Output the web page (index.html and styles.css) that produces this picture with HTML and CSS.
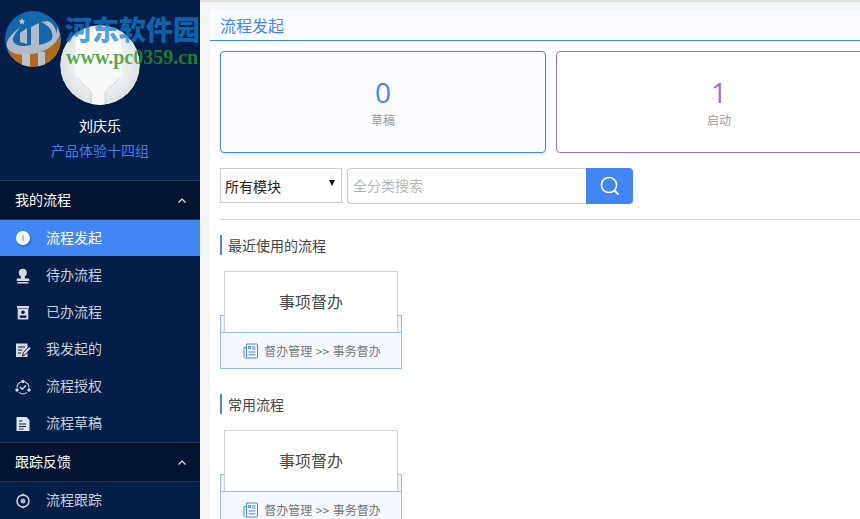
FILE: index.html
```html
<!DOCTYPE html>
<html lang="zh-CN">
<head>
<meta charset="utf-8">
<title>流程发起</title>
<link rel="stylesheet" href="styles.css">
</head>
<body>
<div class="app">
  <aside class="sidebar">
    <div class="profile">
      <div class="avatar">
        <svg viewBox="0 0 80 80" width="80" height="80"><defs><radialGradient id="av"><stop offset="0.6" stop-color="#eef1f1"/><stop offset="1" stop-color="#dce1e2"/></radialGradient></defs><circle cx="40" cy="40" r="40" fill="url(#av)"/><path d="M16 12C20 4 30 2 38 3c10-1 20 2 23 11l1 28c1 6-2 11-6 14-4 6-9 9-11 12v12H32V68c-2-3-8-7-12-12-4-4-6-8-5-14z" fill="#f8fafa"/><path d="M18 53c3 6 11 9 13 15v11M59 53c-3 6-12 9-14 15v11" fill="none" stroke="#c9d1d4" stroke-width="1"/></svg>
      </div>
      <div class="user-name">刘庆乐</div>
      <div class="user-dept">产品体验十四组</div>
    </div>
    <div class="group-head"><span>我的流程</span>
      <svg class="chev" viewBox="0 0 8 5" width="8" height="5"><path d="M.5 4.500L4 1l3.500 3.500" fill="none" stroke="#e8ebf0" stroke-width="1.100"/></svg>
    </div>
    <ul class="menu">
      <li class="menu-item active">
        <svg class="mi mi-shadow" viewBox="0 0 16 16"><circle cx="8" cy="8" r="7" fill="#fff"/><rect x="7.200" y="5" width="1.600" height="6" fill="#a9b6cc"/></svg>
        <span>流程发起</span></li>
      <li class="menu-item">
        <svg class="mi" viewBox="0 0 16 16"><circle cx="7.800" cy="4.700" r="4" fill="#d5dae3"/><path d="M6 7h3.600l.4 3.500h3.300c.7 0 1 .4 1 1V13H1.700v-1.500c0-.6.300-1 1-1H5.700zM2.300 14h11v1.600h-11z" fill="#d5dae3"/></svg>
        <span>待办流程</span></li>
      <li class="menu-item">
        <svg class="mi" viewBox="0 0 16 16"><path d="M2 1h12v2.500H2zM2.700 4h10.600v10.500H2.700z" fill="#d5dae3"/><circle cx="8" cy="7.200" r="1.800" fill="#031e47"/><rect x="4.700" y="10.500" width="6.600" height="2.300" fill="#031e47"/></svg>
        <span>已办流程</span></li>
      <li class="menu-item">
        <svg class="mi" viewBox="0 0 16 16"><path d="M1 1.500h11.500V15H1z" fill="#d5dae3"/><path d="M3 5h7M3 8h4M3 11h3" stroke="#031e47" stroke-width="1.200"/><path d="M7.500 14l.6-3.200 6-6.300 2 2-6 6.300z" fill="#d5dae3" stroke="#031e47" stroke-width="1"/></svg>
        <span>我发起的</span></li>
      <li class="menu-item">
        <svg class="mi" viewBox="0 0 16 16"><path d="M10 3a6 6 0 0 1 4 5.500M12 13.300a6 6 0 0 1-8 0M2 8.500A6 6 0 0 1 6 3" fill="none" stroke="#d5dae3" stroke-width="1.100"/><circle cx="8" cy="2.500" r="1.700" fill="#d5dae3"/><circle cx="2" cy="11" r="1.700" fill="#d5dae3"/><circle cx="14" cy="11" r="1.700" fill="#d5dae3"/><path d="M5 8l2.200 2.200L11 6.500" fill="none" stroke="#d5dae3" stroke-width="1.400"/></svg>
        <span>流程授权</span></li>
      <li class="menu-item">
        <svg class="mi" viewBox="0 0 16 16"><path d="M1.500 1h10l3 3v11h-13z" fill="#e2e6ec"/><path d="M4 5h3.500M4 8h7M4 10.500h7M4 13h4.500" stroke="#031e47" stroke-width="1.100"/></svg>
        <span>流程草稿</span></li>
    </ul>
    <div class="group-head"><span>跟踪反馈</span>
      <svg class="chev" viewBox="0 0 8 5" width="8" height="5"><path d="M.5 4.500L4 1l3.500 3.500" fill="none" stroke="#e8ebf0" stroke-width="1.100"/></svg>
    </div>
    <ul class="menu">
      <li class="menu-item">
        <svg class="mi" viewBox="0 0 16 16"><circle cx="8" cy="8" r="6" fill="none" stroke="#d5dae3" stroke-width="1.500"/><circle cx="8" cy="8" r="2.500" fill="#aab3c2"/><path d="M8 .5v2M8 13.500v2" stroke="#d5dae3" stroke-width="1.200"/></svg>
        <span>流程跟踪</span></li>
    </ul>
  </aside>

  <main class="main">
    <section class="panel">
      <h1 class="panel-title">流程发起</h1>
      <div class="panel-body">
        <div class="stats">
          <div class="stat stat-blue"><div class="stat-num">0</div><div class="stat-label">草稿</div></div>
          <div class="stat stat-purple"><div class="stat-num">1</div><div class="stat-label">启动</div></div>
        </div>
        <div class="toolbar">
          <div class="select"><span>所有模块</span><i class="caret"></i></div>
          <div class="search">
            <div class="search-input">全分类搜索</div>
            <div class="search-btn">
              <svg viewBox="0 0 22 22" width="22" height="22"><circle cx="10" cy="10" r="7.600" fill="none" stroke="#fff" stroke-width="1.500"/><path d="M15.500 15.500l4 4" stroke="#fff" stroke-width="1.800"/></svg>
            </div>
          </div>
        </div>
        <hr class="rule">
        <h2 class="sec-title">最近使用的流程</h2>
        <div class="flow-card">
          <div class="flow-name">事项督办</div>
          <div class="flow-foot">
            <svg class="doc" viewBox="0 0 16 16"><path d="M3.500 1h10a1 1 0 0 1 1 1v12a1 1 0 0 1-1 1h-11a1.500 1.500 0 0 1-1.500-1.500V4.500h2.500M3.500 1v13" fill="none" stroke="#4a86e0" stroke-width="1"/><path d="M5.500 3.500h2v2h-2zM9 4h3.500M9 6h3.500M5.500 9h7M5.500 11.800h7" fill="none" stroke="#4a86e0" stroke-width="1"/></svg>
            <span>督办管理 &gt;&gt; 事务督办</span>
          </div>
        </div>
        <h2 class="sec-title sec-next">常用流程</h2>
        <div class="flow-card">
          <div class="flow-name">事项督办</div>
          <div class="flow-foot">
            <svg class="doc" viewBox="0 0 16 16"><path d="M3.500 1h10a1 1 0 0 1 1 1v12a1 1 0 0 1-1 1h-11a1.500 1.500 0 0 1-1.500-1.500V4.500h2.500M3.500 1v13" fill="none" stroke="#4a86e0" stroke-width="1"/><path d="M5.500 3.500h2v2h-2zM9 4h3.500M9 6h3.500M5.500 9h7M5.500 11.800h7" fill="none" stroke="#4a86e0" stroke-width="1"/></svg>
            <span>督办管理 &gt;&gt; 事务督办</span>
          </div>
        </div>
      </div>
    </section>
  </main>

  <div class="watermark">
    <svg class="wm-logo" viewBox="0 0 56 56" width="56" height="56">
      <defs><clipPath id="wmc"><circle cx="28" cy="28" r="28"/></clipPath></defs>
      <g clip-path="url(#wmc)">
        <rect width="56" height="56" fill="#1268ad"/>
        <path d="M0 38Q28 52 56 26V56H0z" fill="#b06a1e"/>
        <path d="M16 16C6 22 0 31 2 36c3 7 14 9 26 7 12-2 23-9 27-19l-3-10c2 10-6 18-18 20V12l-8 4v18c-8 2-16 1-18-4-1-4 3-9 8-14z" fill="#b4bac5"/>
        <path d="M15 31V22l7-5v16zM36 11l7-1c6 3 9 9 8 15-1 3-3 5-5 6 3-6 2-15-10-20z" fill="#b4bac5"/>
        <path d="M17 43h8v13h-8zM33 41h7v15h-7z" fill="#bcc2cc"/>
        <path d="M17 7l1 2.400 2.400.2-1.900 1.500.7 2.400-2.200-1.400-2.200 1.400.7-2.400-1.900-1.500 2.400-.2z" fill="#c9ced6"/>
      </g>
    </svg>
    <div class="wm-cn">河东软件园</div>
    <div class="wm-url">www.pc0359.cn</div>
  </div>
</div>
</body>
</html>
```
FILE: styles.css
```css
* { box-sizing: border-box; }
html, body { margin: 0; padding: 0; }
body {
  width: 860px;
  height: 519px;
  overflow: hidden;
  font-family: "Noto Sans CJK SC", "Noto Sans", sans-serif;
  font-size: 14px;
}
.app {
  display: flex;
  position: relative;
  width: 860px;
  height: 519px;
  overflow: hidden;
}
.sidebar {
  flex: 0 0 200px;
  background: #031e47;
  color: #c9cfda;
}
.profile {
  height: 181px;
  padding-top: 25px;
  text-align: center;
  border-bottom: 1px solid #1f3655;
}
.avatar {
  width: 80px;
  height: 80px;
  margin: 0 auto;
  border-radius: 50%;
  overflow: hidden;
}
.avatar svg { display: block; }
.user-name {
  margin-top: 10px;
  line-height: 20px;
  color: #fff;
}
.user-dept {
  margin-top: 5px;
  line-height: 20px;
  color: #3f7fe8;
}
.group-head {
  display: flex;
  align-items: center;
  justify-content: space-between;
  height: 39px;
  padding: 0 14px 0 15px;
  background: #02142f;
  color: #fff;
  border-bottom: 1px solid #24364f;
}
.group-head span { padding-bottom: 2px; }
.chev { display: block; }
.menu {
  list-style: none;
  margin: 0;
  padding: 0;
}
.menu-item {
  display: flex;
  align-items: center;
  height: 37px;
  padding-left: 15px;
  gap: 15px;
}
.menu-item span { padding-bottom: 4px; }
.menu + .group-head { border-top: 1px solid #24364f; height: 40px; }
.menu-item.active {
  height: 36px;
  margin-bottom: 1px;
  background: #4285f4;
  color: #fff;
}
.menu-item.active span { padding-bottom: 2px; }
.mi {
  width: 16px;
  height: 16px;
  flex: none;
  display: block;
}
.mi-shadow { filter: drop-shadow(1px 1px 1px rgba(0, 30, 90, .45)); }
.main {
  flex: 1;
  min-width: 0;
  padding: 8px 0 0 10px;
  background: #f6f6f6;
  border-top: 2px solid #e2e2e2;
}
.panel {
  background: #fff;
  height: 600px;
}
.panel-title {
  margin: 0;
  height: 31px;
  padding: 0 0 0 10px;
  font-size: 16px;
  font-weight: 400;
  line-height: 31px;
  color: #4285f4;
  background: #fafbff;
  border-bottom: 1px solid #4285f4;
}
.panel-body { padding: 10px 0 0 10px; overflow: hidden; }
.stats {
  display: flex;
  gap: 10px;
  width: 700px;
}
.stat {
  flex: 0 0 326px;
  height: 102px;
  padding-top: 24px;
  text-align: center;
  border: 1px solid;
  border-radius: 4px;
}
.stat-blue { background: #fafbff; border-color: #4285f4; color: #4285f4; box-shadow: 0 1px 3px rgba(66,133,244,.2); }
.stat-purple { background: #fff; border-color: #a06ee1; color: #a06ee1; }
.stat-num { font-family: "Open Sans", sans-serif; font-size: 28px; line-height: 32px; }
.stat-label { margin-top: 2px; font-size: 12px; line-height: 20px; color: #999; }
.toolbar {
  display: flex;
  align-items: flex-start;
  gap: 5px;
  margin-top: 15px;
}
.select {
  display: flex;
  justify-content: space-between;
  align-items: center;
  width: 122px;
  height: 35px;
  padding: 0 6px 0 4px;
  font-size: 14px;
  color: #222;
  background: #fff;
  border: 1px solid #ccc;
}
.caret {
  width: 0;
  height: 0;
  margin-bottom: 5px;
  border-left: 3px solid transparent;
  border-right: 3px solid transparent;
  border-top: 6px solid #111;
}
.search {
  display: flex;
  width: 286px;
  height: 36px;
}
.search-input {
  flex: 1;
  padding-left: 5px;
  line-height: 32px;
  color: #b5b5b5;
  border: 1px solid #ccc;
  border-right: 0;
  border-radius: 4px 0 0 4px;
}
.search-btn {
  display: flex;
  align-items: center;
  justify-content: center;
  width: 47px;
  background: #4285f4;
  border-radius: 0 4px 4px 0;
}
.rule {
  margin: 15px 0 0;
  border: 0;
  border-top: 1px solid #d8d8d8;
}
.sec-title {
  margin: 15px 0 0;
  height: 20px;
  padding-left: 6px;
  font-size: 14px;
  font-weight: 400;
  line-height: 20px;
  color: #444;
  border-left: 2px solid #4285f4;
}
.sec-next { margin-top: 25px; }
.flow-card {
  width: 182px;
  height: 54px;
  margin-top: 60px;
  padding-top: 16px;
  background: #f2f2f2;
  border: 1px solid #93bbf8;
}
.flow-name {
  height: 62px;
  margin: -61px 3px 0;
  font-size: 16px;
  line-height: 58px;
  text-align: center;
  color: #4a4a4a;
  background: #fff;
  border: 1px solid #d2d2d2;
}
.flow-foot {
  display: flex;
  align-items: center;
  justify-content: center;
  gap: 5px;
  height: 37px;
  margin: -1px -1px 0;
  padding-left: 2px;
  font-size: 12px;
  word-spacing: 1px;
  color: #777;
  background: #f5f8ff;
  border: 1px solid #93bbf8;
}
.doc { width: 16px; height: 16px; flex: none; }
.watermark {
  position: absolute;
  left: 5px;
  top: 11px;
  width: 195px;
  height: 60px;
  pointer-events: none;
}
.wm-logo { position: absolute; left: 0; top: 0; }
.wm-cn {
  position: absolute;
  left: 60px;
  top: 0;
  font-family: "Noto Sans CJK SC", serif;
  font-size: 27px;
  font-weight: 900;
  line-height: 36px;
  white-space: nowrap;
  color: rgba(17,127,208,.73);
}
.wm-url {
  position: absolute;
  left: 61px;
  top: 36px;
  font-family: "Liberation Serif", serif;
  font-size: 20px;
  font-weight: 700;
  line-height: 20px;
  white-space: nowrap;
  color: rgba(47,149,32,.8);
}
```
